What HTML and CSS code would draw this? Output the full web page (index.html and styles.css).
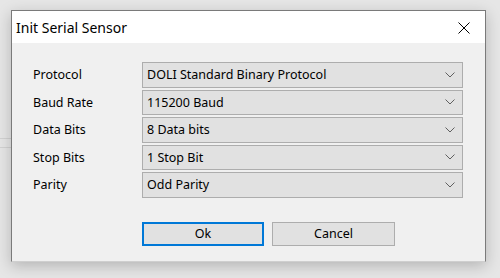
FILE: index.html
```html
<!DOCTYPE html>
<html>
<head>
    <title>Init Serial Sensor</title>
    <link rel="stylesheet" href="styles.css">
</head>
<body>
<div class="backdrop">
    <div class="line one"></div>
    <div class="line two"></div>
</div>
<div class="window">
    <div class="titlebar">
        <span class="title">Init Serial Sensor</span>
        <svg class="close" width="12" height="12" viewBox="0 0 12 12">
            <path d="M0.5 0.5 L11.5 11.5 M11.5 0.5 L0.5 11.5" stroke="#000" stroke-width="1"/>
        </svg>
    </div>
    <div class="content">
        <div class="fields">
            <label>Protocol</label>
            <div class="combo"><span>DOLI Standard Binary Protocol</span><svg class="chevron" width="10" height="6" viewBox="0 0 10 6"><path d="M0.5 0.5 L5 5 L9.5 0.5" fill="none" stroke="#606060" stroke-width="1"/></svg></div>
            <label>Baud Rate</label>
            <div class="combo"><span>115200 Baud</span><svg class="chevron" width="10" height="6" viewBox="0 0 10 6"><path d="M0.5 0.5 L5 5 L9.5 0.5" fill="none" stroke="#606060" stroke-width="1"/></svg></div>
            <label>Data Bits</label>
            <div class="combo"><span>8 Data bits</span><svg class="chevron" width="10" height="6" viewBox="0 0 10 6"><path d="M0.5 0.5 L5 5 L9.5 0.5" fill="none" stroke="#606060" stroke-width="1"/></svg></div>
            <label>Stop Bits</label>
            <div class="combo"><span>1 Stop Bit</span><svg class="chevron" width="10" height="6" viewBox="0 0 10 6"><path d="M0.5 0.5 L5 5 L9.5 0.5" fill="none" stroke="#606060" stroke-width="1"/></svg></div>
            <label>Parity</label>
            <div class="combo"><span>Odd Parity</span><svg class="chevron" width="10" height="6" viewBox="0 0 10 6"><path d="M0.5 0.5 L5 5 L9.5 0.5" fill="none" stroke="#606060" stroke-width="1"/></svg></div>
        </div>
        <div class="buttons">
            <button type="button" class="btn default">Ok</button>
            <button type="button" class="btn">Cancel</button>
        </div>
    </div>
</div>
</body>
</html>
```

FILE: styles.css
```css
body {
    margin: 0;
    padding: 10px 0 0 11px;
    background: #e6e6e6;
    font-family: "Noto Sans", "Open Sans", sans-serif;
    width: 500px;
    height: 278px;
    box-sizing: border-box;
    overflow: hidden;
    position: relative;
}

.backdrop {
    position: absolute;
    left: 0;
    top: 0;
    width: 11px;
    height: 278px;
}

.backdrop .line {
    position: absolute;
    left: 0;
    width: 11px;
    height: 1px;
    background: #d2d2d2;
}

.backdrop .one { top: 138px; }
.backdrop .two { top: 147px; }

.window {
    position: relative;
    width: 475px;
    height: 252px;
    box-sizing: border-box;
    border: 1px solid #7a7a7a;
    border-bottom-color: #cfcfcf;
    background: #f0f0f0;
    box-shadow: 0 4px 14px rgba(0, 0, 0, 0.22);
}

.titlebar {
    height: 32px;
    background: #fff;
    display: flex;
    align-items: center;
    justify-content: space-between;
    padding: 0 15px 0 4px;
}

.title {
    font-size: 14px;
    color: #000;
    padding-top: 1px;
}

.close {
    display: block;
    margin-top: 1px;
}

.content {
    padding: 19px 22px 0 21px;
}

.fields {
    display: grid;
    grid-template-columns: 109px 321px;
    grid-auto-rows: 25.5px;
    row-gap: 2px;
}

.fields label {
    font-size: 12.5px;
    color: #000;
    display: flex;
    align-items: center;
}

.combo {
    box-sizing: border-box;
    border: 1px solid #adadad;
    background: #e1e1e1;
    display: flex;
    align-items: center;
    justify-content: space-between;
    padding: 0 7px 0 4px;
    font-size: 12.5px;
    color: #000;
}

.chevron {
    display: block;
}

.buttons {
    display: flex;
    gap: 8px;
    margin: 24px 0 0 109px;
}

.btn {
    box-sizing: border-box;
    width: 123px;
    height: 24px;
    border: 1px solid #adadad;
    background: #e1e1e1;
    font-family: "Noto Sans", "Open Sans", sans-serif;
    font-size: 12.5px;
    color: #000;
    padding: 0;
}

.btn.default {
    width: 122px;
    border: 2px solid #0078d7;
}
```
